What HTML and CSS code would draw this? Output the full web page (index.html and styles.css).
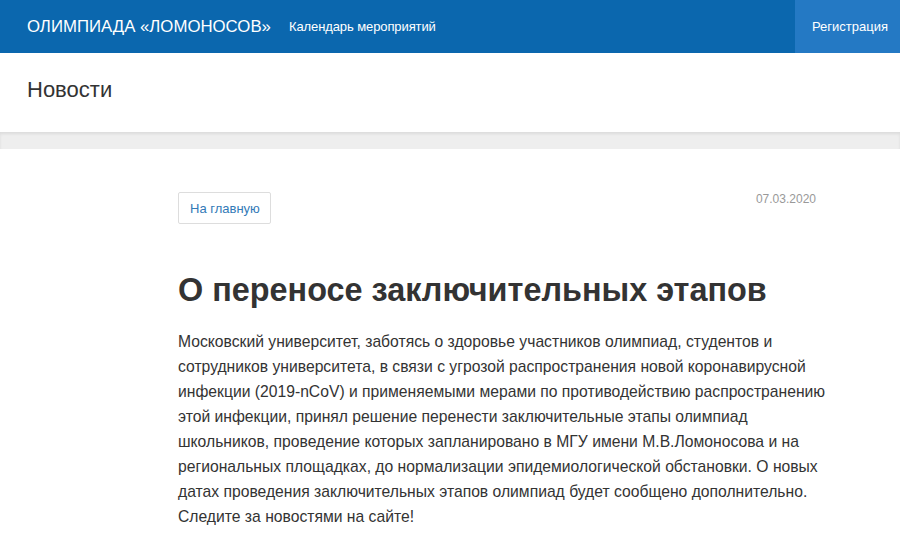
FILE: index.html
```html
<!DOCTYPE html>
<html lang="ru">
<head>
  <meta charset="UTF-8">
  <meta name="viewport" content="width=device-width, initial-scale=1.0">
  <title>Новости</title>
  <link rel="stylesheet" href="styles.css">
</head>
<body>
  <header class="navbar">
    <div class="brand">ОЛИМПИАДА «ЛОМОНОСОВ»</div>
    <nav class="nav-links">
      <a href="#">Календарь мероприятий</a>
    </nav>
    <a class="register" href="#">Регистрация</a>
  </header>

  <section class="page-title">
    <h1>Новости</h1>
  </section>

  <div class="band"></div>

  <main class="article">
    <div class="article-top">
      <a class="back-btn" href="#">На главную</a>
      <span class="date">07.03.2020</span>
    </div>
    <h2>О переносе заключительных этапов</h2>
    <p>Московский университет, заботясь о здоровье участников олимпиад, студентов и<br>
      сотрудников университета, в связи с угрозой распространения новой коронавирусной<br>
      инфекции (2019-nCoV) и применяемыми мерами по противодействию распространению<br>
      этой инфекции, принял решение перенести заключительные этапы олимпиад<br>
      школьников, проведение которых запланировано в МГУ имени М.В.Ломоносова и на<br>
      региональных площадках, до нормализации эпидемиологической обстановки. О новых<br>
      датах проведения заключительных этапов олимпиад будет сообщено дополнительно.<br>
      Следите за новостями на сайте!</p>
  </main>
</body>
</html>
```

FILE: styles.css
```css
body {
  font-family: 'Liberation Sans', Arial, sans-serif;
  margin: 0;
  padding: 0;
  color: #333;
  background: #fff;
}

.navbar {
  background-color: #0b67ae;
  color: white;
  height: 53px;
  display: flex;
  align-items: stretch;
  padding-left: 27px;
}

.brand {
  font-size: 16.8px;
  display: flex;
  align-items: center;
  margin-right: 18px;
}

.nav-links {
  display: flex;
  align-items: center;
  flex: 1;
}

.nav-links a {
  color: white;
  text-decoration: none;
  font-size: 13px;
  letter-spacing: -0.1px;
}

.register {
  background-color: #2479c4;
  color: white;
  text-decoration: none;
  font-size: 13px;
  display: flex;
  align-items: center;
  padding: 0 13px 0 17px;
  width: 75px;
}

.page-title {
  height: 79px;
  display: flex;
  align-items: center;
  padding-left: 27px;
}

.page-title h1 {
  margin: 0 0 5px;
  font-size: 22px;
  font-weight: normal;
  color: #333;
}

.band {
  height: 17px;
  background-color: #eeeeee;
  box-shadow: inset 0 2px 3px rgba(0, 0, 0, 0.08);
}

.article {
  width: 642px;
  margin: 0 0 0 178px;
  padding-top: 43px;
}

.article-top {
  display: flex;
  justify-content: space-between;
  align-items: flex-start;
}

.back-btn {
  border: 1px solid #ddd;
  border-radius: 2px;
  color: #337ab7;
  text-decoration: none;
  font-size: 13px;
  padding: 8px 10px 7px 11px;
  line-height: 15px;
}

.date {
  color: #999;
  font-size: 12px;
  margin-right: 4px;
  line-height: 14px;
}

h2 {
  font-size: 32.4px;
  font-weight: bold;
  margin: 46px 0 19px;
  line-height: 40px;
}

p {
  font-size: 15.7px;
  line-height: 25px;
  margin: 0;
  color: #333;
  white-space: nowrap;
}
```
